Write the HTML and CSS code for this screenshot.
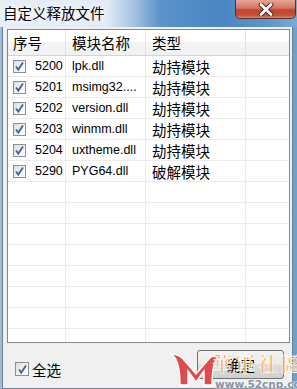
FILE: index.html
```html
<!DOCTYPE html>
<html lang="zh-CN">
<head>
    <meta charset="UTF-8">
    <meta name="viewport" content="width=device-width, initial-scale=1.0">
    <title>自定义释放文件</title>
    <link rel="stylesheet" href="styles.css">
</head>
<body>
    <div class="window">
        <div class="titlebar">
            <span class="title cn">自定义释放文件</span>
            <div class="close">
                <svg width="24" height="13" viewBox="0 0 24 13">
                    <path d="M7 1.5 L17 11.5 M17 1.5 L7 11.5" stroke="#4b2020" stroke-width="4.6" stroke-linecap="round"/>
                    <path d="M7 1.5 L17 11.5 M17 1.5 L7 11.5" stroke="#ffffff" stroke-width="2.8" stroke-linecap="round"/>
                </svg>
            </div>
        </div>

        <div class="client">
            <div class="list">
                <div class="row head">
                    <div class="cell c1 cn">序号</div>
                    <div class="cell c2 cn">模块名称</div>
                    <div class="cell c3 cn">类型</div>
                    <div class="cell c4"></div>
                </div>
                <div class="body">
                    <div class="row">
                        <div class="cell c1"><span class="check"></span>5200</div>
                        <div class="cell c2">lpk.dll</div>
                        <div class="cell c3 cn">劫持模块</div>
                        <div class="cell c4"></div>
                    </div>
                    <div class="row">
                        <div class="cell c1"><span class="check"></span>5201</div>
                        <div class="cell c2">msimg32....</div>
                        <div class="cell c3 cn">劫持模块</div>
                        <div class="cell c4"></div>
                    </div>
                    <div class="row">
                        <div class="cell c1"><span class="check"></span>5202</div>
                        <div class="cell c2">version.dll</div>
                        <div class="cell c3 cn">劫持模块</div>
                        <div class="cell c4"></div>
                    </div>
                    <div class="row">
                        <div class="cell c1"><span class="check"></span>5203</div>
                        <div class="cell c2">winmm.dll</div>
                        <div class="cell c3 cn">劫持模块</div>
                        <div class="cell c4"></div>
                    </div>
                    <div class="row">
                        <div class="cell c1"><span class="check"></span>5204</div>
                        <div class="cell c2">uxtheme.dll</div>
                        <div class="cell c3 cn">劫持模块</div>
                        <div class="cell c4"></div>
                    </div>
                    <div class="row">
                        <div class="cell c1"><span class="check"></span>5290</div>
                        <div class="cell c2">PYG64.dll</div>
                        <div class="cell c3 cn">破解模块</div>
                        <div class="cell c4"></div>
                    </div>
                    <div class="row"><div class="cell c1"></div><div class="cell c2"></div><div class="cell c3"></div><div class="cell c4"></div></div>
                    <div class="row"><div class="cell c1"></div><div class="cell c2"></div><div class="cell c3"></div><div class="cell c4"></div></div>
                    <div class="row"><div class="cell c1"></div><div class="cell c2"></div><div class="cell c3"></div><div class="cell c4"></div></div>
                    <div class="row"><div class="cell c1"></div><div class="cell c2"></div><div class="cell c3"></div><div class="cell c4"></div></div>
                    <div class="row"><div class="cell c1"></div><div class="cell c2"></div><div class="cell c3"></div><div class="cell c4"></div></div>
                    <div class="row"><div class="cell c1"></div><div class="cell c2"></div><div class="cell c3"></div><div class="cell c4"></div></div>
                    <div class="row"><div class="cell c1"></div><div class="cell c2"></div><div class="cell c3"></div><div class="cell c4"></div></div>
                    <div class="row"><div class="cell c1"></div><div class="cell c2"></div><div class="cell c3"></div><div class="cell c4"></div></div>
                </div>
            </div>

            <div class="footer">
                <label class="check-all"><span class="check"></span><span class="cn">全选</span></label>
                <button class="ok cn">确定</button>
            </div>
        </div>

        <!-- site watermark stamped on the screenshot -->
        <div class="watermark">
            <svg class="wm-logo" width="56" height="36" viewBox="0 0 56 36">
                <path d="M2 3 Q12 6 12 34 L20 34 L20 20 L28 31 L36 20 L36 34 L44 34 Q44 6 54 3 Q44 3 40 9 L28 23 L16 9 Q12 3 2 3 Z" fill="#df4a4e" stroke="#fff" stroke-width="1.4"/>
            </svg>
            <div class="wm-text">
                <span class="wm-name cn">華軍社區</span>
                <span class="wm-url">www.52cnp.com</span>
            </div>
        </div>
    </div>
</body>
</html>
```

FILE: styles.css
```css
body {
    margin: 0;
    font-family: "Liberation Sans", "Noto Sans CJK SC", sans-serif;
    font-size: 12.5px;
    color: #000;
}
.cn {
    font-family: "Noto Sans CJK SC", sans-serif;
    font-size: 14.5px;
}
.window {
    position: relative;
    width: 297px;
    height: 389px;
    display: flex;
    flex-direction: column;
    overflow: hidden;
    background: linear-gradient(90deg, #9fbcd8 0, #7fa6cc 40%, #5f92c4 70%, #6c9fd2 100%);
}
.titlebar {
    height: 27px;
    flex: none;
    display: flex;
    align-items: flex-start;
    justify-content: space-between;
    background: linear-gradient(90deg, #e6eef7 0, #e2ebf5 36%, #9cbde0 46%, #5a92c9 54%, #4a86c2 75%, #5d95cc 90%, #79a9d8 100%);
}
.title {
    padding: 3px 0 0 3px;
    line-height: 20px;
    text-shadow: 0 0 6px #fff, 0 0 10px #fff;
}
.close {
    width: 61px;
    height: 19px;
    margin-right: 1px;
    display: flex;
    align-items: center;
    justify-content: center;
    border: 1px solid #5a2f2f;
    border-top: none;
    border-radius: 0 0 5px 5px;
    background: linear-gradient(#e6a598 0, #d4765f 45%, #c0442c 55%, #c55038 85%, #d98670 100%);
    box-sizing: border-box;
}
.client {
    flex: 1;
    display: flex;
    flex-direction: column;
    margin: 0 4px 0 2px;
    padding: 2px 2px 0 4px;
    background: #f0f0f0;
    border: 1px solid #6d7f93;
    border-top: none;
    min-height: 0;
}
.list {
    height: 312px;
    flex: none;
    border: 1px solid #828790;
    background: #fff;
    overflow: hidden;
    display: flex;
    flex-direction: column;
}
.row {
    display: grid;
    grid-template-columns: 58px 80px 100px 1fr;
    height: 21px;
    box-sizing: border-box;
    border-bottom: 1px solid #ececec;
}
.row.head {
    height: 26px;
    flex: none;
    border-bottom: 1px solid #d5d5d5;
    background: linear-gradient(#ffffff 0, #ffffff 45%, #f3f4f6 50%, #f0f1f3 100%);
}
.cell {
    display: flex;
    align-items: center;
    padding-left: 6px;
    border-right: 1px solid #ececec;
    white-space: nowrap;
    overflow: hidden;
}
.head .cell {
    border-right-color: #dfe2e6;
}
.row .c1 {
    padding-left: 5px;
}
.cell.c4 {
    border-right: none;
}
.body {
    flex: 1;
}
.check {
    width: 13px;
    height: 13px;
    flex: none;
    box-sizing: border-box;
    border: 1px solid #8e8f8f;
    margin-right: 9px;
    background:
        url("data:image/svg+xml;utf8,<svg xmlns='http://www.w3.org/2000/svg' width='11' height='11' viewBox='0 0 11 11'><path d='M2 5.5 L4.3 8.6 L9 1.6' fill='none' stroke='%234a5f97' stroke-width='1.8'/></svg>") center no-repeat,
        linear-gradient(135deg, #dcdcdc 0, #f4f4f4 60%, #ffffff 100%);
}
.footer {
    flex: 1;
    display: flex;
    align-items: center;
    justify-content: space-between;
    padding: 1px 6px 0 8px;
}
.check-all {
    display: flex;
    align-items: center;
    margin-top: 6px;
}
.check-all .check {
    width: 14px;
    height: 14px;
    margin-right: 3px;
}
.ok {
    width: 87px;
    height: 29px;
    margin-bottom: 3px;
    border: 1px solid #707070;
    border-radius: 3px;
    color: #000;
    background: linear-gradient(#f2f2f2 0, #ebebeb 48%, #dddddd 52%, #cfcfcf 100%);
    padding: 0;
}
.watermark {
    position: absolute;
    left: 168px;
    top: 351px;
    display: flex;
    align-items: flex-start;
    pointer-events: none;
}
.wm-text {
    display: flex;
    flex-direction: column;
    align-items: flex-start;
    margin-left: -12px;
}
.wm-name {
    font-family: "Noto Serif CJK SC", "Noto Sans CJK SC", serif;
    font-size: 20px;
    font-weight: bold;
    letter-spacing: 3px;
    line-height: 26px;
    color: rgba(242, 172, 84, 0.85);
    -webkit-text-stroke: 0.5px #fff;
}
.wm-url {
    font-family: "DejaVu Sans", sans-serif;
    font-size: 10.5px;
    font-weight: bold;
    margin: 1px 0 0 3px;
    color: #8794a0;
    text-shadow: 0 0 2px #fff, 0 0 2px #fff;
}
```
